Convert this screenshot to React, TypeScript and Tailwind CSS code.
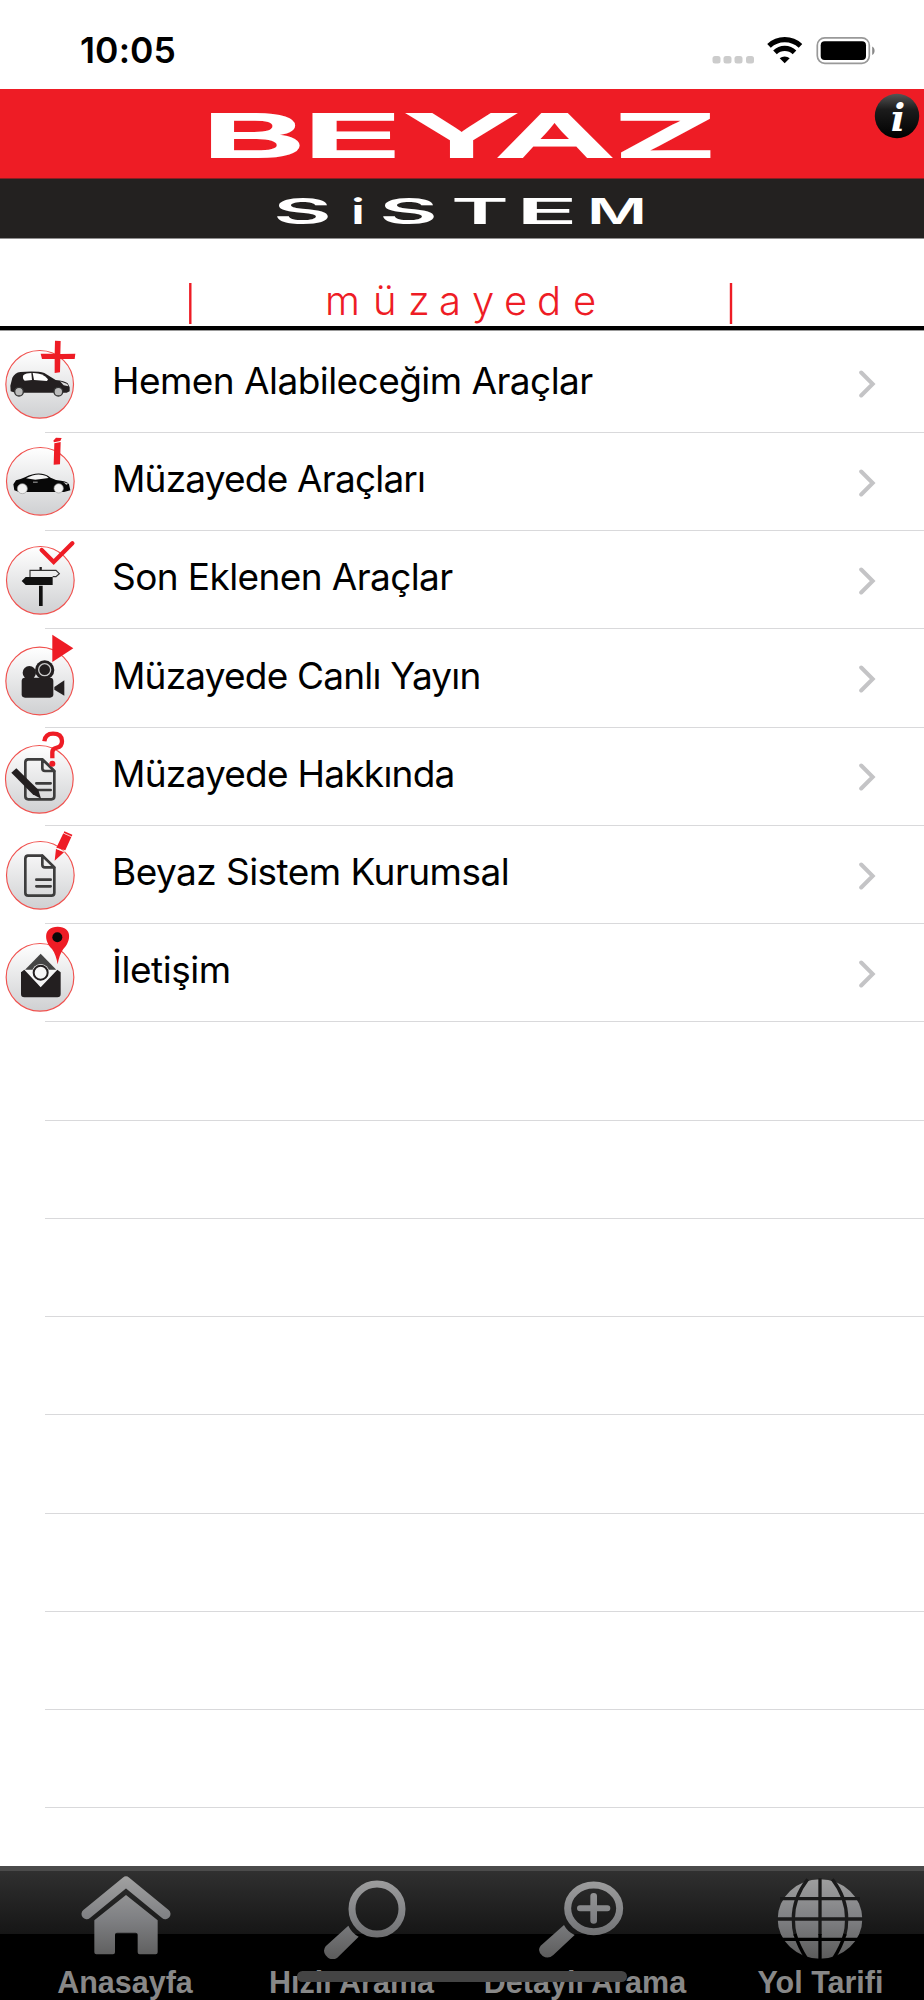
import type { ReactNode } from 'react';

type Glyph = [char: string, x: number, width: number];

// Wordmark letters, each one stretched to its own width
function Wordmark({ glyphs, y, className }: { glyphs: Glyph[]; y: number; className: string }) {
  return (
    <text y={y} className={className}>
      {glyphs.map(([char, x, width], i) => (
        <tspan key={i} x={x} textLength={width} lengthAdjust="spacingAndGlyphs">
          {char}
        </tspan>
      ))}
    </text>
  );
}

const beyaz: Glyph[] = [
  ['B', 201, 104],
  ['E', 302, 100],
  ['Y', 406, 111],
  ['A', 497, 116],
  ['Z', 614, 103],
];

const sistem: Glyph[] = [
  ['S', 273, 59],
  ['i', 351, 14],
  ['S', 379, 59],
  ['T', 451, 58],
  ['E', 516, 62],
  ['M', 587, 60],
];

function StatusBar() {
  return (
    <div className="flex h-[89px] items-center justify-between pl-[80px] pr-[46px] pt-[13px]">
      <span className="text-[35.5px] font-semibold leading-none tracking-[0.1px]">10:05</span>
      <svg className="h-[30px] w-[166px]" viewBox="0 0 166 30">
        <g fill="#cccccc">
          <rect x="0.5" y="20" width="8" height="7.5" rx="2.5" />
          <rect x="11.5" y="20" width="8" height="7.5" rx="2.5" />
          <rect x="22.5" y="20" width="8" height="7.5" rx="2.5" />
          <rect x="34" y="20" width="8" height="7.5" rx="2.5" />
        </g>
        <g fill="none" stroke="#000" strokeWidth="5.2">
          <path d="M57 9.800a23 23 0 0 1 31.500 0" />
          <path d="M63 16.400a14 14 0 0 1 19.500 0" />
        </g>
        <path d="M67.700 22.300a7.500 7.500 0 0 1 10 0L72.700 27.300z" />
        <rect x="105.3" y="1.8" width="52" height="25.5" rx="7.5" fill="none" stroke="#999" strokeWidth="1.7" />
        <rect x="108.7" y="5.2" width="45.3" height="18.8" rx="4" />
        <path d="M160.200 10.500c3.200 1.500 3.200 7 0 8.500z" fill="#888" />
      </svg>
    </div>
  );
}

function Header() {
  return (
    <header className="h-[241px]">
      <svg className="block h-[241px] w-[924px]" viewBox="0 89 924 241">
        <defs>
          <linearGradient id="info" x1="0" y1="0" x2="0" y2="1">
            <stop offset="0" stopColor="#555" />
            <stop offset="0.35" stopColor="#1c1c1c" />
            <stop offset="1" stopColor="#000" />
          </linearGradient>
        </defs>
        <rect y="89" width="924" height="90" fill="#ee1c25" />
        <rect y="178.5" width="924" height="60" fill="#232120" />
        <Wordmark
          glyphs={beyaz}
          y={156.5}
          className="fill-white stroke-white stroke-[2px] font-['Inter'] text-[59px] font-medium"
        />
        <Wordmark glyphs={sistem} y={223.5} className="fill-white font-['Inter'] text-[35px] font-semibold" />
        <circle cx="897" cy="116" r="22.2" fill="url(#info)" />
        <text
          x="898"
          y="130.5"
          textAnchor="middle"
          className="fill-white font-['DejaVu_Serif'] text-[38px] font-bold italic"
        >
          i
        </text>
        <path d="M190.300 283v41M731 283v41" stroke="#ee1c25" strokeWidth="2.4" />
        <text
          x="325 373 408 439 472 504 537 573"
          y="315"
          className="fill-[#ee1c25] font-['Inter'] text-[40px] font-light"
        >
          müzayede
        </text>
        <rect y="326" width="924" height="4" fill="#000" />
      </svg>
    </header>
  );
}

function RowIcon({ top, cx, cy, children }: { top: number; cx: number; cy: number; children: ReactNode }) {
  return (
    <svg className="-mb-px h-[98px] w-20 shrink-0" viewBox={`0 ${top} 240 294`}>
      <circle cx={cx} cy={cy} r="101.5" fill="url(#disc)" stroke="#f0524f" strokeWidth="3.5" />
      {children}
    </svg>
  );
}

function DocumentShape({ y }: { y: number }) {
  return (
    <g fill="none" stroke="#3d3d3d" strokeWidth="8" strokeLinejoin="round" transform={`translate(0 ${y})`}>
      <path d="M83 3h44l36 36v75q0 9-9 9H85q-9 0-9-9V12q0-9 9-9z" />
      <path d="M127 3v27q0 8 8 8h28z" fill="#eee" />
      <path d="M109 75h43M109 95h43" strokeLinecap="round" />
    </g>
  );
}

function HatchbackIcon() {
  return (
    <RowIcon top={13} cx={119} cy={161}>
      <path
        d="M31 165l6-24q8-15 24-17 50-4 72 3l34 21q27 3 36 10l6 12v12l-9 4H46l-14-4z"
        fill="#231f20"
      />
      <path d="M70 134q8-7 24-7l2 21-22 2q-8-6-4-16z" fill="#fff" />
      <path d="M98 127q30-1 46 19l-3 5-39-3z" fill="#fff" />
      <path d="M180 152l22 8 3 7-14-3z" fill="#ddd" />
      <g fill="#bbb" stroke="#333" strokeWidth="4">
        <circle cx="57" cy="183" r="13" />
        <circle cx="175" cy="183" r="13" />
      </g>
      <path d="M165 30l17 1-1 39 45-1-2 16h-43l-1 40-16 2v-42h-38l-4-16h42z" fill="#ee1c25" />
    </RowIcon>
  );
}

function CoupeIcon() {
  return (
    <RowIcon top={308} cx={121} cy={453}>
      <path d="M40 462l8-12q14-3 27-9 45-23 77 1l16 7q34 3 39 13l4 18-19 5H57l-14-5z" fill="#080808" />
      <path d="M78 444q32-19 61-7l7 6-40 5z" fill="#f4f4f4" />
      <path d="M99 454h14v3H99z" fill="#aaa" />
      <path d="M190 455l15 5-6 3z" fill="#ddd" />
      <g fill="#f2f2f2" stroke="#999" strokeWidth="2">
        <circle cx="67" cy="475" r="15" />
        <circle cx="176" cy="474" r="14" />
      </g>
      <path d="M160 331l8-9 17 1-4 9-19 4zM163 339l19-4-2 67-19 1z" fill="#ee1c25" />
    </RowIcon>
  );
}

function SignpostIcon() {
  return (
    <RowIcon top={2} cx={121} cy={150}>
      <path d="M122 110v9" stroke="#231f20" strokeWidth="7" />
      <path d="M90 142v-22h78l10 10-10 9h-10" fill="none" stroke="#333" strokeWidth="3.5" />
      <path d="M65 152l12-12h81v24H77zM117 166h11v61h-11z" fill="#111" />
      <path d="M125 59l36 36 56-56" fill="none" stroke="#ee1c25" strokeWidth="13" strokeLinecap="round" />
    </RowIcon>
  );
}

function CameraIcon() {
  return (
    <RowIcon top={297} cx={119} cy={450}>
      <g fill="#231f20">
        <rect x="65" y="440" width="95" height="60" rx="10" />
        <circle cx="88" cy="425" r="20" />
        <circle cx="134" cy="417" r="29" />
        <path d="M163 468l30-20v46l-30-18z" />
      </g>
      <circle cx="134" cy="416" r="18" fill="none" stroke="#ccc" strokeWidth="4" />
      <path d="M157 311l63 41-63 41z" fill="#ee1c25" />
    </RowIcon>
  );
}

function AboutIcon() {
  return (
    <RowIcon top={22} cx={118} cy={176}>
      <DocumentShape y={113} />
      <path d="M34 156l15-13 66 64 8 27-25-13z" fill="#231f20" />
      <path
        d="M133 62q3-23 26-23 26 0 27 22 0 17-15 20-14 3-14 13v19"
        fill="none"
        stroke="#ee1c25"
        strokeWidth="13"
      />
      <circle cx="157" cy="129" r="9" fill="#ee1c25" />
    </RowIcon>
  );
}

function CorporateIcon() {
  return (
    <RowIcon top={316} cx={121} cy={464}>
      <DocumentShape y={402} />
      <path d="M190 338l24 11-18 40-27-8zM168 384l24 11-28 25z" fill="#ee1c25" />
      <path d="M193 332l24 10-2 7-24-11z" fill="#ee1c25" />
      <path d="M190 337l27 12M169 384l27 9" stroke="#fff" strokeWidth="2" />
    </RowIcon>
  );
}

function ContactIcon() {
  return (
    <RowIcon top={70} cx={120} cy={230}>
      <path d="M75 207l47-48 47 48z" fill="#444" />
      <path d="M71 208h104l-52 54z" fill="#f6f6f6" />
      <path d="M63 215l10-8 49 53 50-53 10 8v65q0 10-10 10H73q-10 0-10-10z" fill="#231f20" />
      <circle cx="122" cy="216" r="26" fill="#f6f6f6" />
      <circle cx="122" cy="216" r="21" fill="#f6f6f6" stroke="#231f20" strokeWidth="6" />
      <path d="M173 78c45 0 41 44 17 67-9 12-14 29-17 46-3-17-8-34-17-46-24-23-28-67 17-67z" fill="#ee1c25" />
      <circle cx="172" cy="110" r="15" fill="#090909" />
    </RowIcon>
  );
}

const menu = [
  { label: 'Hemen Alabileceğim Araçlar', icon: <HatchbackIcon />, tracking: 'tracking-[-0.55px]' },
  { label: 'Müzayede Araçları', icon: <CoupeIcon />, tracking: 'tracking-[-0.8px]' },
  { label: 'Son Eklenen Araçlar', icon: <SignpostIcon />, tracking: 'tracking-[-0.6px]' },
  { label: 'Müzayede Canlı Yayın', icon: <CameraIcon />, tracking: 'tracking-[-0.8px]' },
  { label: 'Müzayede Hakkında', icon: <AboutIcon />, tracking: 'tracking-[-0.75px]' },
  { label: 'Beyaz Sistem Kurumsal', icon: <CorporateIcon />, tracking: 'tracking-[-0.55px]' },
  { label: 'İletişim', icon: <ContactIcon />, tracking: 'tracking-[-0.45px]' },
];

function Separator() {
  return <div className="ml-[45px] h-px shrink-0 bg-[#d9d9db]" />;
}

function MenuList() {
  return (
    <main className="h-[1536px] overflow-hidden">
      <div className="mb-[3.7px] h-px bg-[#999]" />
      {menu.map(({ label, icon, tracking }) => (
        <div key={label} className="flex h-[98.25px] flex-col">
          <div className="flex h-[97.25px] items-center">
            {icon}
            <span className={`${tracking} ml-[32px] flex-1 pb-[6px] text-[37px] leading-none whitespace-nowrap`}>
              {label}
            </span>
            <svg className="mr-[48px] mt-[2px] h-[28px] w-[18px]" viewBox="0 0 18 28">
              <path
                d="M3.200 2.500L14.700 14 3.200 25.500"
                fill="none"
                stroke="#c4c4c6"
                strokeWidth="4"
                strokeLinecap="round"
              />
            </svg>
          </div>
          <Separator />
        </div>
      ))}
      {Array.from({ length: 8 }, (_, i) => (
        <div key={i} className="flex h-[98.25px] flex-col justify-end">
          <Separator />
        </div>
      ))}
    </main>
  );
}

function HomeIcon() {
  return (
    <svg className="ml-px h-[84px] w-[90px]" viewBox="241 74 270 252">
      <path
        d="M258 191L376 94l118 97"
        fill="none"
        stroke="url(#metal)"
        strokeWidth="31"
        strokeLinecap="round"
        strokeLinejoin="round"
      />
      <path
        d="M376 134l95 76v96q0 6-6 6h-48q-6 0-6-6v-53q0-6-6-6h-56q-6 0-6 6v53q0 6-6 6h-50q-6 0-6-6v-96z"
        fill="url(#metal)"
      />
    </svg>
  );
}

function SearchIcon() {
  return (
    <svg className="ml-[26px] h-[84px] w-[84px]" viewBox="968 75 252 252">
      <circle cx="1130" cy="177" r="75" fill="none" stroke="url(#metal)" strokeWidth="21" />
      <path d="M1044 227q10 22 31 33l-64 63q-14 10-28 0l-7-7q-10-14 0-27z" fill="url(#metal)" />
    </svg>
  );
}

function DetailedSearchIcon() {
  return (
    <svg className="mr-[8px] h-[84px] w-[86px]" viewBox="230 75 258 252">
      <ellipse cx="397" cy="175" rx="78" ry="70" fill="none" stroke="url(#metal)" strokeWidth="21" />
      <path d="M387 138q0-9 10-9t10 9v28h31q9 0 9 9t-9 9h-31v28q0 9-10 9t-10-9v-28h-31q-9 0-9-9t9-9h31z" fill="url(#metal)" />
      <path d="M308 225q10 20 32 30l-64 60q-15 14-32 3-18-15-6-31z" fill="url(#metal)" />
    </svg>
  );
}

function GlobeIcon() {
  return (
    <svg className="mr-px h-[84px] w-[86px]" viewBox="946 75 258 252">
      <ellipse cx="1075" cy="207" rx="127" ry="119" fill="url(#metal)" />
      <g fill="none" stroke="#1a1a1a" strokeWidth="10">
        <path d="M1075 85v170M940 207h270M955 146h240M1038 88q-43 55-43 119 0 28 6 50M1112 88q43 55 43 119 0 28-6 50" />
        <path stroke="#000" d="M1075 252v78M955 268h240M1000 252q12 40 36 76M1150 252q-12 40-36 76" />
      </g>
    </svg>
  );
}

function TabBar() {
  return (
    <nav className="relative h-[134px] bg-black">
      <div className="h-[5px] bg-[#4b4b4b]" />
      <div className="h-[63px] bg-linear-to-b from-[#303030] to-[#161616]" />
      <div className="absolute inset-0 flex pt-[9px] text-[30.5px] font-bold leading-none text-[#888] font-['Liberation_Sans']">
        <Tab width="w-[250px]" label="Anasayfa" icon={<HomeIcon />} />
        <Tab width="w-[203px]" label="Hızlı Arama" icon={<SearchIcon />} />
        <Tab width="w-[264px]" label="Detaylı Arama" icon={<DetailedSearchIcon />} />
        <Tab width="w-[207px]" label="Yol Tarifi" icon={<GlobeIcon />} />
      </div>
      {/* Home indicator */}
      <div className="absolute left-[297px] top-[105px] h-[11px] w-[330px] rounded-full bg-[#444]" />
    </nav>
  );
}

function Tab({ width, label, icon }: { width: string; label: string; icon: ReactNode }) {
  return (
    <div className={`${width} flex flex-col items-center`}>
      {icon}
      <span className="mt-[8px] whitespace-nowrap">{label}</span>
    </div>
  );
}

export default function App() {
  return (
    <div className="h-[2000px] w-[924px] overflow-hidden bg-white text-black font-['Inter',sans-serif]">
      {/* Shared gradients */}
      <svg className="absolute h-0 w-0">
        <defs>
          <linearGradient id="disc" x1="0" y1="0" x2="0" y2="1">
            <stop offset="0" stopColor="#fff" />
            <stop offset="1" stopColor="#cfd0d2" />
          </linearGradient>
          <linearGradient id="metal" gradientUnits="userSpaceOnUse" x1="0" y1="80" x2="0" y2="325">
            <stop offset="0" stopColor="#a0a0a0" />
            <stop offset="0.5" stopColor="#808184" />
            <stop offset="1" stopColor="#5c5c5c" />
          </linearGradient>
        </defs>
      </svg>
      <StatusBar />
      <Header />
      <MenuList />
      <TabBar />
    </div>
  );
}
